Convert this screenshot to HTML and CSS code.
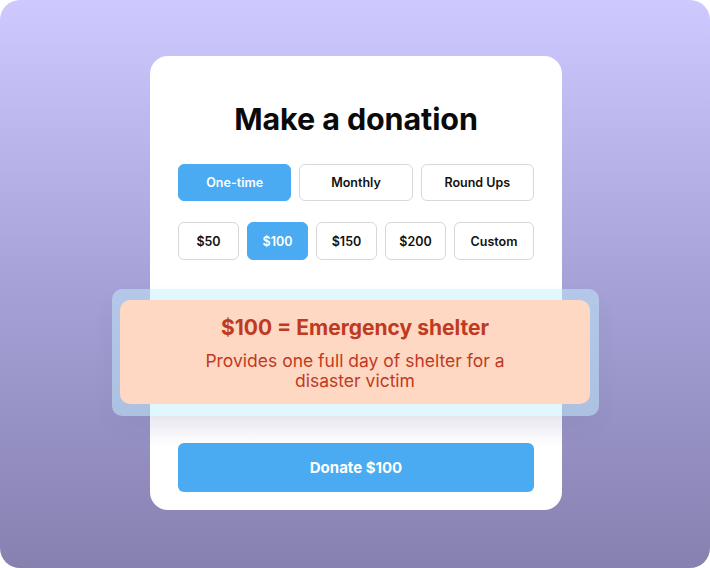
FILE: index.html
```html
<!DOCTYPE html>
<html>
<head>
<meta charset="utf-8">
<link rel="stylesheet" href="styles.css">
</head>
<body>
<div class="frame">
  <div class="card">
    <h1 class="title">Make a donation</h1>
    <div class="row freq">
      <button class="btn active">One-time</button>
      <button class="btn">Monthly</button>
      <button class="btn">Round Ups</button>
    </div>
    <div class="row amounts">
      <button class="btn amt">$50</button>
      <button class="btn amt active">$100</button>
      <button class="btn amt">$150</button>
      <button class="btn amt">$200</button>
      <button class="btn custom">Custom</button>
    </div>
    <div class="glass">
      <div class="impact">
        <div class="impact-title">$100 = Emergency shelter</div>
        <div class="impact-text">Provides one full day of shelter for a disaster victim</div>
      </div>
    </div>
    <div class="fade">
      <button class="donate">Donate $100</button>
    </div>
  </div>
</div>
</body>
</html>
```
FILE: styles.css
```css
* { box-sizing: border-box; }
html, body { margin: 0; padding: 0; background: #ffffff; }
body { font-family: Inter, "Noto Sans", sans-serif; }
.frame {
  width: 710px;
  height: 568px;
  border-radius: 20px;
  background: linear-gradient(180deg, #cec9ff 0%, #a6a2d8 50%, #8781b0 100%);
  display: flex;
  justify-content: center;
  padding: 56px 0 0 2px;
}
.card {
  width: 412px;
  height: 454px;
  background: #ffffff;
  border-radius: 18px;
  padding: 0 28px 18px;
  display: flex;
  flex-direction: column;
}
.title {
  margin: 0;
  height: 108px;
  padding-top: 44px;
  font-size: 30.5px;
  line-height: 38px;
  font-weight: 700;
  color: #0a0a0a;
  text-align: center;
  letter-spacing: -0.1px;
}
.row { display: flex; gap: 8px; }
.freq { height: 37px; }
.freq .btn { flex: 1; }
.amounts { height: 38px; margin-top: 21px; }
.btn {
  font-family: Inter, "Noto Sans", sans-serif;
  font-size: 12.5px;
  font-weight: 600;
  color: #111111;
  background: #ffffff;
  border: 1px solid #d6d8da;
  border-radius: 6px;
  padding: 0;
  cursor: pointer;
}
.btn.active {
  background: #4aabf2;
  border-color: #4aabf2;
  color: #ffffff;
}
.amt { width: 61px; flex: none; }
.custom { flex: 1; }
.glass {
  margin: 29px -65px 0 -66px;
  height: 127px;
  padding: 11px 9px 12px 8px;
  border-radius: 10px;
  background: rgba(194, 240, 252, 0.5);
  box-shadow: 0 12px 22px rgba(60, 50, 110, 0.05);
  position: relative;
}
.impact {
  height: 104px;
  border-radius: 10px;
  background: #fed8c3;
  text-align: center;
  padding-top: 14px;
  color: #c03a1f;
}
.impact-title {
  font-size: 21px;
  font-weight: 700;
  line-height: 28px;
}
.impact-text {
  margin: 9px auto 0;
  max-width: 330px;
  font-size: 17.5px;
  line-height: 20px;
  font-weight: 400;
}
.fade {
  margin: 0 -28px;
  padding: 27px 28px 0;
  background: linear-gradient(180deg, #f0eff4 0%, #ffffff 30px);
}
.donate {
  width: 100%;
  height: 49px;
  border: none;
  border-radius: 6px;
  background: #4aabf2;
  color: #ffffff;
  font-family: Inter, "Noto Sans", sans-serif;
  font-size: 15px;
  font-weight: 700;
  padding: 0;
}
```
